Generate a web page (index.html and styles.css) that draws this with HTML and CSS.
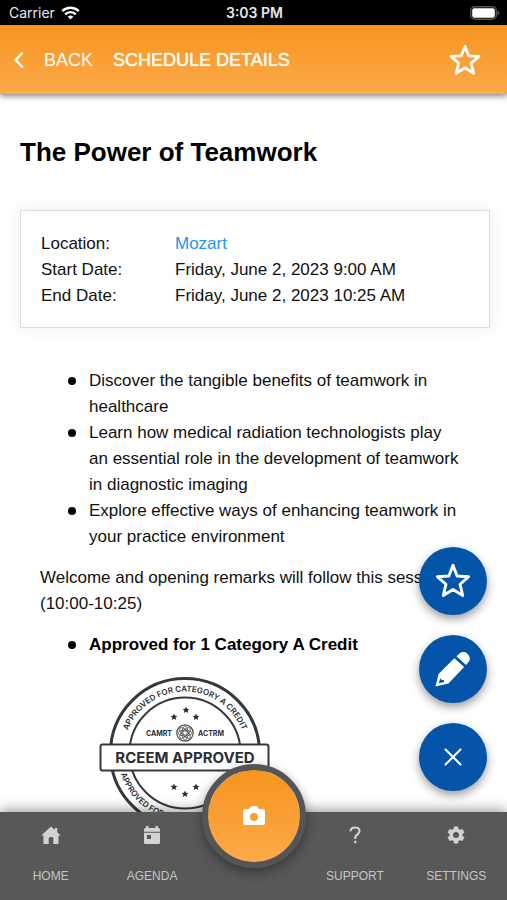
FILE: index.html
```html
<!DOCTYPE html>
<html lang="en">
<head>
    <meta charset="UTF-8">
    <meta name="viewport" content="width=device-width, initial-scale=1.0">
    <title>Schedule Details</title>
    <link rel="stylesheet" href="styles.css">
</head>
<body>
    <div class="status-bar">
        <div class="carrier">
            <span>Carrier</span>
            <svg width="19" height="14" viewBox="0 0 19 14" fill="none" stroke="#fff" stroke-width="2.4">
                <path d="M1.2 5.2a11.8 11.8 0 0 1 16.6 0"/>
                <path d="M4.2 8.3a7.5 7.5 0 0 1 10.6 0"/>
                <path d="M9.5 13.6L6.700 10.800a4 4 0 0 1 5.600 0z" fill="#fff" stroke="none"/>
            </svg>
        </div>
        <div class="time">3:03 PM</div>
        <svg class="battery" width="30" height="14" viewBox="0 0 30 14">
            <rect x="0.7" y="0.7" width="25.6" height="12.6" rx="4" fill="none" stroke="#555" stroke-width="1.4"/>
            <rect x="2.2" y="2.2" width="22.6" height="9.6" rx="2" fill="#fff"/>
            <path d="M27.5 4.5c2.400 1 2.400 4 0 5z" fill="#555"/>
        </svg>
    </div>

    <header class="header">
        <a class="back" href="#">
            <svg width="10" height="18" viewBox="0 0 10 18" fill="none" stroke="#fff" stroke-width="2.4"><path d="M8.7 1.500L1.700 9l7 7.500"/></svg>
            BACK
        </a>
        <div class="header-title">SCHEDULE DETAILS</div>
        <button class="header-star" aria-label="Add to favorites">
            <svg width="34" height="34" viewBox="0 0 34 34" fill="none" stroke="#fff" stroke-width="2.8" stroke-linejoin="round"><path d="M17 3.500l3.700 9.300 10.300.7-7.700 6.600 2.400 10.100L17 24.800l-8.700 5.400 2.400-10.100L3 13.500l10.300-.7z"/></svg>
        </button>
    </header>

    <div class="content">
        <main class="page">
            <h1>The Power of Teamwork</h1>
            <dl class="info">
                <dt>Location:</dt>
                <dd><a href="#">Mozart</a></dd>
                <dt>Start Date:</dt>
                <dd>Friday, June 2, 2023 9:00 AM</dd>
                <dt>End Date:</dt>
                <dd>Friday, June 2, 2023 10:25 AM</dd>
            </dl>
            <div class="description">
                <ul>
                    <li>Discover the tangible benefits of teamwork in healthcare</li>
                    <li>Learn how medical radiation technologists play an essential role in the development of teamwork in diagnostic imaging</li>
                    <li>Explore effective ways of enhancing teamwork in your practice environment</li>
                </ul>
                <p>Welcome and opening remarks will follow this session (10:00-10:25)</p>
                <ul>
                    <li><strong>Approved for 1 Category A Credit</strong></li>
                </ul>
                <svg class="seal" width="172" height="152" viewBox="0 0 172 152">
                    <defs>
                        <path id="arc-top" d="M24.5 76a61.500 61.500 0 0 1 123 0"/>
                        <path id="arc-bottom" d="M18.500 76a67.500 67.500 0 0 0 135 0"/>
                        <path id="seal-star" d="M0-3.600L1-1.200 3.500-1 1.600.6 2.200 3 0 1.700-2.200 3-1.600.6-3.500-1-1-1.200z"/>
                    </defs>
                    <g fill="none" stroke="#343a3a">
                        <circle cx="86" cy="76" r="74.5" stroke-width="3"/>
                        <circle cx="86" cy="76" r="55.5" stroke-width="2"/>
                    </g>
                    <g class="seal-ring">
                        <text text-anchor="middle"><textPath href="#arc-top" startOffset="50%">APPROVED FOR CATEGORY A CREDIT</textPath></text>
                        <text><textPath href="#arc-bottom" startOffset="21">APPROVED FOR CATEGORY A CREDIT</textPath></text>
                    </g>
                    <g fill="#2b2f31">
                        <use href="#seal-star" x="75" y="40"/>
                        <use href="#seal-star" x="87" y="33"/>
                        <use href="#seal-star" x="97" y="40"/>
                        <use href="#seal-star" x="75" y="110"/>
                        <use href="#seal-star" x="86" y="117"/>
                        <use href="#seal-star" x="97" y="110"/>
                    </g>
                    <g fill="none" stroke="#4a4f50" stroke-width="0.8">
                        <circle cx="86" cy="56" r="8.2" stroke-width="1.2"/>
                        <circle cx="86" cy="56" r="2.2"/>
                        <ellipse cx="86" cy="56" rx="3" ry="7"/>
                        <ellipse cx="86" cy="56" rx="3" ry="7" transform="rotate(45 86 56)"/>
                        <ellipse cx="86" cy="56" rx="3" ry="7" transform="rotate(90 86 56)"/>
                        <ellipse cx="86" cy="56" rx="3" ry="7" transform="rotate(135 86 56)"/>
                    </g>
                    <text class="seal-org" x="60" y="59" text-anchor="middle">CAMRT</text>
                    <text class="seal-org" x="112" y="59" text-anchor="middle">ACTRM</text>
                    <rect x="1.5" y="67.5" width="168" height="26" rx="2" fill="#fff" stroke="#343a3a" stroke-width="2"/>
                    <text class="seal-banner" x="86" y="86" text-anchor="middle">RCEEM APPROVED</text>
                </svg>
            </div>
        </main>

        <div class="actions">
            <button aria-label="Favorite">
                <svg width="38" height="38" viewBox="0 0 34 34" fill="none" stroke="#fff" stroke-width="2.6" stroke-linejoin="round"><path d="M17 3l3.700 9.500 10.300.7-7.700 6.700 2.400 10.100L17 24.600 8.300 30l2.400-10.100L3 13.200l10.300-.7z"/></svg>
            </button>
            <button aria-label="Take notes">
                <svg width="36" height="36" viewBox="0 0 36 36" fill="#fff">
                    <path d="M21.500 5.300l3-2.800c2.800-2.200 5.700-1.700 8.100.4 2.600 2.500 3 5.300 1.100 7.900l-2.700 3.200z"/>
                    <path fill-rule="evenodd" d="M19.400 7.200l9.700 8.700L13.500 32.500.5 35.500 3.500 23zM5.300 27.300l-1.500 4.900 5.400-1.200-.4-2.100-2.100.2z"/>
                </svg>
            </button>
            <button aria-label="Close">
                <svg width="18" height="18" viewBox="0 0 18 18" fill="none" stroke="#fff" stroke-width="2" stroke-linecap="round"><path d="M1.500 1.500l15 15M16.500 1.500l-15 15"/></svg>
            </button>
        </div>
    </div>

    <nav class="tabs">
        <a href="#">
            <svg width="20" height="20" viewBox="0 0 20 20" fill="#d2d2d2"><path d="M10 1.500l3.800 3.500V3h2.400v4.200l3.600 3.300h-2.300V19h-5.200v-5.500c0-1-1-1.500-2.300-1.500s-2.300.5-2.300 1.500V19H2.500v-8.500H.2z"/></svg>
            HOME
        </a>
        <a href="#">
            <svg width="20" height="20" viewBox="0 0 20 20" fill="#d2d2d2"><path d="M2 6.700V4.500Q2 3 3.500 3H4V1h2.500v2h7V1H16v2h.5Q18 3 18 4.500v2.200z"/><path fill-rule="evenodd" d="M2 7.700h16v9.800q0 1.500-1.500 1.500h-13Q2 19 2 17.500zM5 10v4h4v-4z"/></svg>
            AGENDA
        </a>
        <button class="camera" aria-label="Camera">
            <svg width="24" height="20" viewBox="0 0 24 20" fill="#fff"><path fill-rule="evenodd" d="M3 3h4l1.500-2q.5-1 1.500-1h4q1 0 1.500 1L17 3h4q2 0 2 2v12q0 2-2 2H3q-2 0-2-2V5q0-2 2-2zM12 7a4 4 0 1 0 0 8 4 4 0 0 0 0-8z"/></svg>
        </button>
        <a href="#">
            <svg width="20" height="20" viewBox="0 0 20 20" fill="none" stroke="#d2d2d2" stroke-width="2.2"><path d="M5.500 6.200Q5.700 2.500 10 2.500q4.500 0 4.500 3.500c0 3.200-4.300 3.500-4.300 7v1M10.200 15.800v2.500"/></svg>
            SUPPORT
        </a>
        <a href="#">
            <svg width="20" height="20" viewBox="0 0 20 20" fill="#d2d2d2"><path fill-rule="evenodd" d="M8 1.500h4l.5 2.400 1.500.9 2.400-.8 2 3.500-1.800 1.600v1.800l1.800 1.600-2 3.500-2.400-.8-1.500.9-.5 2.400H8l-.5-2.400-1.500-.9-2.400.8-2-3.500 1.800-1.600V9.100L1.600 7.500l2-3.500 2.400.8 1.500-.9zM10 7a3 3 0 1 0 0 6 3 3 0 0 0 0-6z"/></svg>
            SETTINGS
        </a>
    </nav>
</body>
</html>
```
FILE: styles.css
```css
* {
    box-sizing: border-box;
}
body {
    margin: 0;
    height: 100vh;
    display: flex;
    flex-direction: column;
    overflow: hidden;
    font-family: "Liberation Sans", Arial, sans-serif;
    font-size: 17px;
    line-height: 26px;
    color: #111;
    background: #fff;
}
svg {
    display: block;
    flex-shrink: 0;
}
a {
    color: #2196f3;
    text-decoration: none;
}
button {
    padding: 0;
    border: none;
    background: none;
    cursor: pointer;
}

/* status bar */
.status-bar {
    display: grid;
    grid-template-columns: 1fr auto 1fr;
    align-items: center;
    height: 25px;
    padding: 0 7px 0 9px;
    background: #000;
    color: #e8e8e8;
    font-family: Inter, sans-serif;
    font-size: 14px;
}
.carrier {
    display: flex;
    align-items: center;
    gap: 6px;
}
.time {
    font-weight: 600;
}
.battery {
    justify-self: end;
}

/* header */
.header {
    position: relative;
    z-index: 2;
    display: flex;
    align-items: center;
    gap: 20px;
    height: 69px;
    padding: 0 25px 0 14px;
    background: linear-gradient(#f7941f, #fcaa4b);
    box-shadow: 0 2px 6px rgba(0, 0, 0, 0.5);
    color: #fff;
    font-size: 18px;
}
.back {
    display: flex;
    align-items: center;
    gap: 20px;
    color: #fff;
}
.header-title {
    text-shadow: 0 0 1px #fff;
}
.header-star {
    margin-left: auto;
}

/* session */
.content {
    position: relative;
    flex: 1;
    min-height: 0;
}
.page {
    height: 100%;
    padding: 42px 17px 0 20px;
    overflow-y: auto;
    scrollbar-width: none;
}
h1 {
    margin: 0;
    font-size: 26px;
    line-height: 32px;
    color: #000;
}
.info {
    display: grid;
    grid-template-columns: 134px 1fr;
    margin: 42px 0 40px;
    padding: 20px 20px 18px;
    border: 1px solid #ddd;
    box-shadow: 0 0 16px rgba(0, 0, 0, 0.08);
}
.info dd {
    margin: 0;
}
.description {
    padding: 0 27px 0 20px;
}
.description ul {
    margin: 0;
    padding-left: 49px;
    list-style: none;
}
.description li::before {
    content: "";
    float: left;
    width: 8px;
    height: 8px;
    margin: 9px 0 0 -21px;
    border-radius: 50%;
    background: #000;
}
.description p {
    margin: 15px 0;
}
.description strong {
    color: #000;
}

/* accreditation seal */
.seal {
    margin: 19px 0 20px 59px;
}
.seal text {
    font-family: Inter, sans-serif;
    font-weight: 700;
    fill: #2b2f31;
}
.seal .seal-ring text {
    font-size: 8px;
    font-weight: 600;
}
.seal .seal-org {
    font-size: 7px;
}
.seal .seal-banner {
    font-size: 15px;
}

/* floating buttons */
.actions {
    position: absolute;
    right: 20px;
    bottom: 21px;
    display: flex;
    flex-direction: column;
    gap: 20px;
}
.actions button {
    display: flex;
    align-items: center;
    justify-content: center;
    width: 68px;
    height: 68px;
    border-radius: 50%;
    background: #0455a9;
    box-shadow: 0 4px 10px rgba(0, 0, 0, 0.4);
}

/* bottom tabs */
.tabs {
    position: relative;
    z-index: 1;
    display: grid;
    grid-template-columns: repeat(5, minmax(0, 1fr));
    height: 88px;
    background: #585858;
    box-shadow: 0 -2px 12px rgba(0, 0, 0, 0.4);
}
.tabs a {
    display: flex;
    flex-direction: column;
    align-items: center;
    gap: 18px;
    padding-top: 13px;
    color: #c4c4c4;
    font-size: 12px;
}
.tabs .camera {
    display: flex;
    align-items: center;
    justify-content: center;
    justify-self: center;
    width: 104px;
    height: 104px;
    margin-top: -48px;
    border: 6px solid #555;
    border-radius: 50%;
    background: linear-gradient(#f7941f, #fcaa4b) padding-box;
    box-shadow: 0 4px 12px rgba(0, 0, 0, 0.4);
}
```
